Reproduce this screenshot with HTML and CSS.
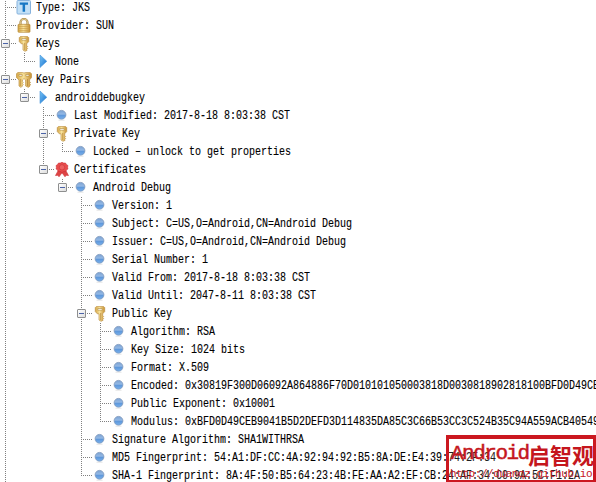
FILE: index.html
```
<!DOCTYPE html>
<html lang="en">
<head>
<meta charset="utf-8">
<title>Keystore properties</title>
<link rel="stylesheet" href="styles.css">
</head>
<body>
<svg class="defs" aria-hidden="true">
<defs>
<linearGradient id="gold" x2="1" y2="0"><stop offset="0" stop-color="#d3a545"/><stop offset=".45" stop-color="#f8e29a"/><stop offset="1" stop-color="#c68f32"/></linearGradient>
<linearGradient id="ball" x2="0" y2="1"><stop offset="0" stop-color="#7ba2d3"/><stop offset=".45" stop-color="#96bae5"/><stop offset=".5" stop-color="#5b94d8"/><stop offset="1" stop-color="#78b2ee"/></linearGradient>
<linearGradient id="blue" x2="1" y2="1"><stop offset="0" stop-color="#78c4f5"/><stop offset="1" stop-color="#1670cf"/></linearGradient>
<symbol id="dot" viewBox="0 0 16 16"><circle cx="7.500" cy="6.800" r="4.400" fill="url(#ball)" stroke="#7d97ba" stroke-width=".8"/><path d="M4.500 12.300h6" stroke="#ddd" stroke-width=".7"/></symbol>
<symbol id="arrow" viewBox="0 0 16 16"><path d="M5 1 11.800 7.300 5 13.500Z" fill="url(#blue)" stroke="#4795da" stroke-width=".6"/></symbol>
<symbol id="key" viewBox="0 0 16 16"><path d="M4.500.400h7l1.200 1.200v4l-2 2.200v1.700l.9 1-.9 1 .9 1-.9 1 .4.800L9 15.300 7 14V7.800H5.300L3.300 5.600v-4Z" fill="url(#gold)" stroke="#bd9145" stroke-width=".7"/><path d="M5.800 2.500h4.400v1.700H5.800Z" fill="#fff" stroke="#b08838" stroke-width=".6"/><path d="M8.700 7v7" stroke="#a9742a" stroke-width=".6"/></symbol>
<symbol id="pair" viewBox="0 0 16 16"><path d="M1.800.400h5L8 1.200 9.200.400h5l1.400 1.500V5.500l-2 2.300v1.700l.9 1-.9 1 .9 1-.7.900.3.600-1.800 1.300L9.600 14V8L8 6.500 6.400 8v1.500l.8 1-.8 1 .8 1-.8 1 .2.600-1.800 1.200L3 14V8L.4 5.500V1.900Z" fill="url(#gold)" stroke="#bd9145" stroke-width=".7"/><path d="M3 2.500h3.200v1.600H3ZM9.800 2.500H13v1.600H9.800Z" fill="#fff" stroke="#b08838" stroke-width=".6"/><path d="M4.700 7v7M11.500 7v7" stroke="#a9742a" stroke-width=".6"/></symbol>
<symbol id="lock" viewBox="0 0 16 16"><path d="M4.500 7V4.300a3.500 3.300 0 0 1 7 0V7" fill="none" stroke="#a9894a" stroke-width="2.200"/><path d="M4.500 7V4.300a3.500 3.300 0 0 1 7 0V7" fill="none" stroke="#e5d095" stroke-width=".9"/><rect x="2" y="6.300" width="12" height="8" rx=".8" fill="url(#gold)" stroke="#b68a38" stroke-width=".7"/><path d="M2.500 8.500h11M2.500 10.500h11M2.500 12.500h11" stroke="#c99c48" stroke-width=".6"/></symbol>
<symbol id="type" viewBox="0 0 16 16"><rect x="1" y=".5" width="13.500" height="13.500" rx="1" fill="#c3e0f6" stroke="#86b2dd"/><path d="M3.700 2.500h8.300v2.200H9.100V11.800H6.600V4.700H3.700Z" fill="#1777c4"/></symbol>
<symbol id="cert" viewBox="0 0 16 16"><path d="m4.500 8-3 5.500 2.300-.2L5 14.800l3-4 3 4 1.200-1.500 2.300.2-3-5.500Z" fill="#df4545" stroke="#c92f36" stroke-width=".6"/><path d="m8 .3 1.700.8 1.800-.1.900 1.500 1.500 1-.3 1.800.3 1.700-1.500 1.100-.9 1.500H9.600L8 10.500 6.400 9.600H4.500l-.9-1.500L2.100 7l.3-1.700-.3-1.800 1.500-1 .9-1.500 1.800.1Z" fill="#e84c4c" stroke="#c92f36" stroke-width=".6"/><circle cx="8" cy="5.300" r="2.700" fill="#ec6060" stroke="#cf383c" stroke-width=".7"/></symbol>
</defs>
</svg>
<main class="tree">
<div class="row"><i class="tee"></i><svg class="icon"><use href="#type"/></svg><span class="label">Type: JKS</span></div>
<div class="row"><i class="tee"></i><svg class="icon"><use href="#lock"/></svg><span class="label">Provider: SUN</span></div>
<div class="row"><i class="tee open"></i><svg class="icon"><use href="#key"/></svg><span class="label">Keys</span></div>
<div class="row"><i class="line"></i><i class="tee last"></i><svg class="icon"><use href="#arrow"/></svg><span class="label">None</span></div>
<div class="row"><i class="tee open"></i><svg class="icon"><use href="#pair"/></svg><span class="label">Key Pairs</span></div>
<div class="row"><i class="line"></i><i class="tee last open"></i><svg class="icon"><use href="#arrow"/></svg><span class="label">androiddebugkey</span></div>
<div class="row"><i class="line"></i><i class="gap"></i><i class="tee"></i><svg class="icon"><use href="#dot"/></svg><span class="label">Last Modified: 2017-8-18 8:03:38 CST</span></div>
<div class="row"><i class="line"></i><i class="gap"></i><i class="tee open"></i><svg class="icon"><use href="#key"/></svg><span class="label">Private Key</span></div>
<div class="row"><i class="line"></i><i class="gap"></i><i class="line"></i><i class="tee last"></i><svg class="icon"><use href="#dot"/></svg><span class="label">Locked – unlock to get properties</span></div>
<div class="row"><i class="line"></i><i class="gap"></i><i class="tee last open"></i><svg class="icon"><use href="#cert"/></svg><span class="label">Certificates</span></div>
<div class="row"><i class="line"></i><i class="gap"></i><i class="gap"></i><i class="tee last open"></i><svg class="icon"><use href="#dot"/></svg><span class="label">Android Debug</span></div>
<div class="row"><i class="line"></i><i class="gap"></i><i class="gap"></i><i class="gap"></i><i class="tee"></i><svg class="icon"><use href="#dot"/></svg><span class="label">Version: 1</span></div>
<div class="row"><i class="line"></i><i class="gap"></i><i class="gap"></i><i class="gap"></i><i class="tee"></i><svg class="icon"><use href="#dot"/></svg><span class="label">Subject: C=US,O=Android,CN=Android Debug</span></div>
<div class="row"><i class="line"></i><i class="gap"></i><i class="gap"></i><i class="gap"></i><i class="tee"></i><svg class="icon"><use href="#dot"/></svg><span class="label">Issuer: C=US,O=Android,CN=Android Debug</span></div>
<div class="row"><i class="line"></i><i class="gap"></i><i class="gap"></i><i class="gap"></i><i class="tee"></i><svg class="icon"><use href="#dot"/></svg><span class="label">Serial Number: 1</span></div>
<div class="row"><i class="line"></i><i class="gap"></i><i class="gap"></i><i class="gap"></i><i class="tee"></i><svg class="icon"><use href="#dot"/></svg><span class="label">Valid From: 2017-8-18 8:03:38 CST</span></div>
<div class="row"><i class="line"></i><i class="gap"></i><i class="gap"></i><i class="gap"></i><i class="tee"></i><svg class="icon"><use href="#dot"/></svg><span class="label">Valid Until: 2047-8-11 8:03:38 CST</span></div>
<div class="row"><i class="line"></i><i class="gap"></i><i class="gap"></i><i class="gap"></i><i class="tee open"></i><svg class="icon"><use href="#key"/></svg><span class="label">Public Key</span></div>
<div class="row"><i class="line"></i><i class="gap"></i><i class="gap"></i><i class="gap"></i><i class="line"></i><i class="tee"></i><svg class="icon"><use href="#dot"/></svg><span class="label">Algorithm: RSA</span></div>
<div class="row"><i class="line"></i><i class="gap"></i><i class="gap"></i><i class="gap"></i><i class="line"></i><i class="tee"></i><svg class="icon"><use href="#dot"/></svg><span class="label">Key Size: 1024 bits</span></div>
<div class="row"><i class="line"></i><i class="gap"></i><i class="gap"></i><i class="gap"></i><i class="line"></i><i class="tee"></i><svg class="icon"><use href="#dot"/></svg><span class="label">Format: X.509</span></div>
<div class="row"><i class="line"></i><i class="gap"></i><i class="gap"></i><i class="gap"></i><i class="line"></i><i class="tee"></i><svg class="icon"><use href="#dot"/></svg><span class="label">Encoded: 0x30819F300D06092A864886F70D010101050003818D0030818902818100BFD0D49CEB</span></div>
<div class="row"><i class="line"></i><i class="gap"></i><i class="gap"></i><i class="gap"></i><i class="line"></i><i class="tee"></i><svg class="icon"><use href="#dot"/></svg><span class="label">Public Exponent: 0x10001</span></div>
<div class="row"><i class="line"></i><i class="gap"></i><i class="gap"></i><i class="gap"></i><i class="line"></i><i class="tee last"></i><svg class="icon"><use href="#dot"/></svg><span class="label">Modulus: 0xBFD0D49CEB9041B5D2DEFD3D114835DA85C3C66B53CC3C524B35C94A559ACB405493</span></div>
<div class="row"><i class="line"></i><i class="gap"></i><i class="gap"></i><i class="gap"></i><i class="tee"></i><svg class="icon"><use href="#dot"/></svg><span class="label">Signature Algorithm: SHA1WITHRSA</span></div>
<div class="row"><i class="line"></i><i class="gap"></i><i class="gap"></i><i class="gap"></i><i class="tee"></i><svg class="icon"><use href="#dot"/></svg><span class="label">MD5 Fingerprint: 54:A1:DF:CC:4A:92:94:92:B5:8A:DE:E4:39:74:2F:34</span></div>
<div class="row"><i class="line"></i><i class="gap"></i><i class="gap"></i><i class="gap"></i><i class="tee last"></i><svg class="icon"><use href="#dot"/></svg><span class="label">SHA-1 Fingerprint: 8A:4F:50:B5:64:23:4B:FE:AA:A2:EF:CB:24:AF:34:C0:9A:5C:F1:2A</span></div>
</main>
<aside class="stamp">
<div class="brand"><span class="latin">Android</span><span class="han">启智观</span></div>
<div class="site">http://duanqz.github.io</div>
</aside>
</body>
</html>
```
FILE: styles.css
```
body {
  margin: 0;
  height: 482px;
  overflow: hidden;
  position: relative;
  background: #fff;
  color: #000;
}
.defs { position: absolute; width: 0; height: 0; }
.tree { margin-top: -1px; padding-left: 5px; }
.row { display: flex; height: 18px; white-space: nowrap; }
.gap, .line { flex: none; width: 19px; }
.tee { flex: none; width: 11px; position: relative; }
.line, .tee {
  background: repeating-linear-gradient(to bottom, #808080 0 1px, #fff 1px 2px) 0 0 / 1px 100% no-repeat;
}
.tee {
  background:
    repeating-linear-gradient(to right, #808080 0 1px, #fff 1px 2px) 0 8px / 100% 1px no-repeat,
    repeating-linear-gradient(to bottom, #808080 0 1px, #fff 1px 2px) 0 0 / 1px 100% no-repeat;
}
.tee.last { background-size: 100% 1px, 1px 9px; }
.open::before {
  content: "";
  position: absolute;
  left: -4px;
  top: 4px;
  width: 7px;
  height: 7px;
  border: 1px solid #8e8f8f;
  border-radius: 1px;
  background: linear-gradient(#4b63a7, #4b63a7) 1px 3px / 5px 1px no-repeat, linear-gradient(135deg, #fff, #ddd);
}
.icon { flex: none; width: 16px; height: 16px; margin: 1px 4px 0 0; }
.label {
  padding-top: 1px;
  font: 10px/18px "Liberation Mono", monospace;
  -webkit-text-stroke: .1px #000;
  transform: scaleY(1.25);
  transform-origin: 0 13px;
}
.stamp {
  position: absolute;
  left: 446px;
  top: 435px;
  box-sizing: border-box;
  width: 150px;
  height: 47px;
  border: solid #cb1820;
  border-width: 4px 3px 2px;
  background: rgba(255, 255, 255, .12);
  color: #c5161d;
  overflow: hidden;
}
.brand { display: flex; align-items: center; height: 29px; padding-left: 2px; white-space: nowrap; }
.latin { width: 77px; font: 21px/28px "Liberation Mono", monospace; letter-spacing: -1.500px; -webkit-text-stroke: .5px #c5161d; }
.han { font: bold 22px/28px "Noto Sans CJK SC", sans-serif; }
.site { padding-left: 1px; font: 11px/12px "Liberation Mono", monospace; letter-spacing: -.42px; white-space: nowrap; }
```
